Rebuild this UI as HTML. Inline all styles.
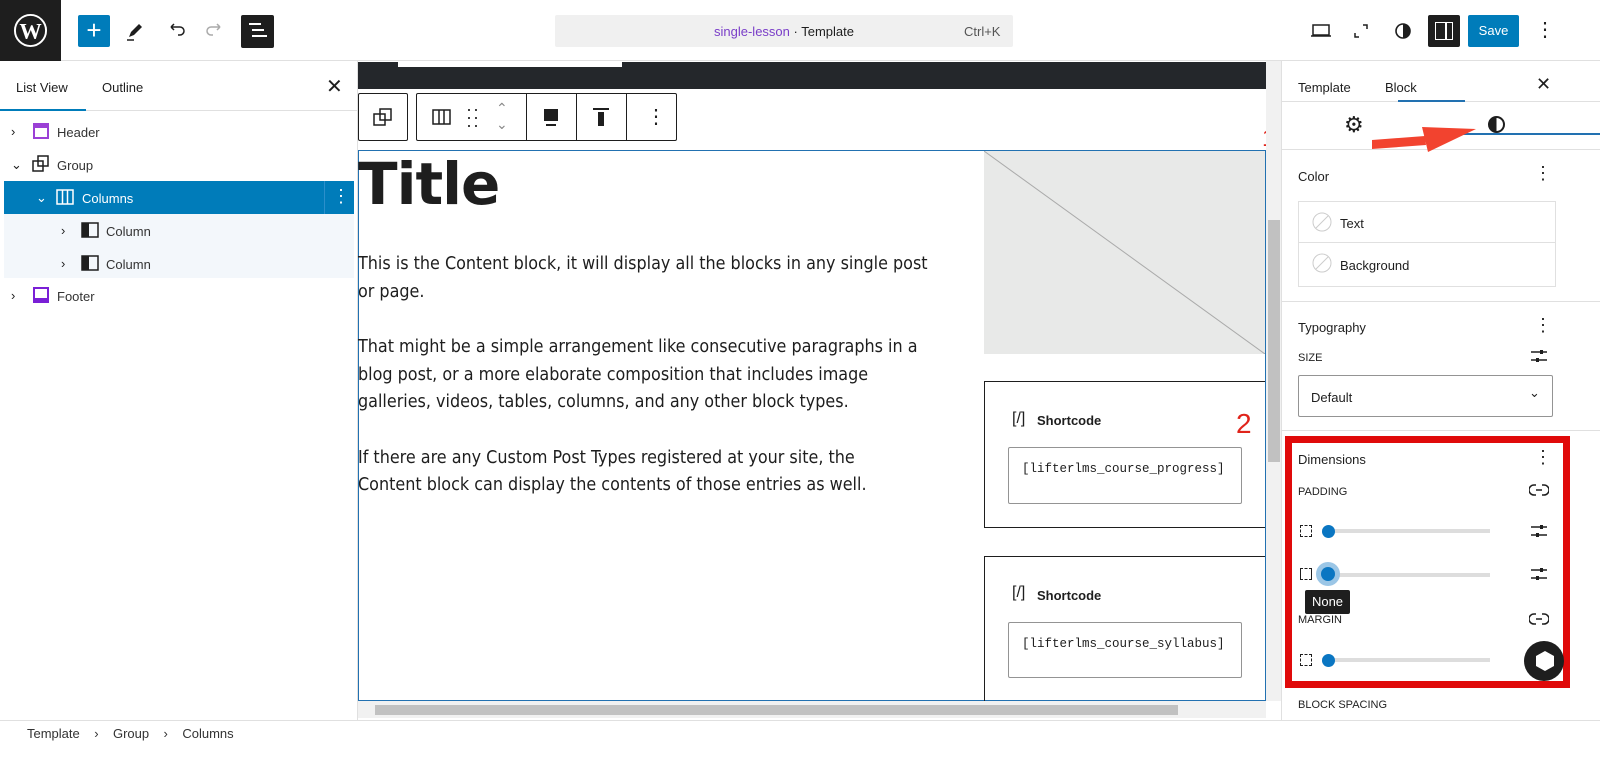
<!DOCTYPE html>
<html><head><meta charset="utf-8"><style>
*{box-sizing:border-box;margin:0;padding:0}
body{width:1600px;height:760px;overflow:hidden;background:#fff;font-family:"Liberation Sans",sans-serif;color:#1e1e1e;position:relative}
.a{position:absolute}
.t13{font-size:13px}
</style></head><body>
<!-- top bar -->
<div class="a" style="left:0;top:0;width:1600px;height:61px;border-bottom:1px solid #e0e0e0"></div>
<div class="a" style="left:0;top:0;width:61px;height:61px;background:#1e1e1e"></div>
<svg class="a" style="left:13px;top:13px" width="35" height="35" viewBox="0 0 36 36"><circle cx="18" cy="18" r="16" fill="none" stroke="#fff" stroke-width="2"/><text x="18" y="26" text-anchor="middle" font-family="Liberation Serif" font-weight="bold" font-size="23" fill="#fff">W</text></svg>
<div class="a" style="left:78px;top:15px;width:32px;height:32px;background:#007cba;border-radius:2px;color:#fff;font-size:26px;line-height:30px;text-align:center">+</div>
<svg class="a" style="left:124px;top:20px" width="22" height="22" viewBox="0 0 22 22"><path d="M5 17l2-5 8-8 3 3-8 8z" fill="#1e1e1e"/><path d="M3 20h7" stroke="#1e1e1e" stroke-width="1.5"/></svg>
<svg class="a" style="left:165px;top:20px" width="22" height="22" viewBox="0 0 22 22"><path d="M6 7h9a4 4 0 0 1 0 8h-2M6 7l3-3M6 7l3 3" fill="none" stroke="#1e1e1e" stroke-width="1.5"/></svg>
<svg class="a" style="left:204px;top:20px" width="22" height="22" viewBox="0 0 22 22"><path d="M16 7H7a4 4 0 0 0 0 8h2M16 7l-3-3M16 7l-3 3" fill="none" stroke="#aaa" stroke-width="1.5"/></svg>
<div class="a" style="left:241px;top:15px;width:33px;height:33px;background:#1e1e1e;border-radius:2px"></div>
<div class="a" style="left:249px;top:23px;width:12px;height:2px;background:#fff"></div>
<div class="a" style="left:252px;top:29px;width:12px;height:2px;background:#fff"></div>
<div class="a" style="left:252px;top:35px;width:15px;height:2px;background:#fff"></div>
<div class="a" style="left:555px;top:15px;width:458px;height:32px;background:#f0f0f0;border-radius:2px"></div>
<div class="a t13" style="left:555px;top:24px;width:458px;text-align:center"><span style="color:#7a3ec8">single-lesson</span> · Template</div>
<div class="a t13" style="left:964px;top:24px;color:#555">Ctrl+K</div>
<svg class="a" style="left:1310px;top:21px" width="22" height="20" viewBox="0 0 22 20"><rect x="3" y="4" width="16" height="10" fill="none" stroke="#1e1e1e" stroke-width="1.5"/><path d="M1 15h20" stroke="#1e1e1e" stroke-width="1.5"/></svg>
<svg class="a" style="left:1351px;top:21px" width="20" height="20" viewBox="0 0 20 20"><path d="M12 4h4v4M8 16H4v-4" fill="none" stroke="#1e1e1e" stroke-width="1.5"/></svg>
<svg class="a" style="left:1393px;top:21px" width="20" height="20" viewBox="0 0 20 20"><circle cx="10" cy="10" r="7" fill="none" stroke="#1e1e1e" stroke-width="1.6"/><path d="M10 3a7 7 0 0 1 0 14z" fill="#1e1e1e"/></svg>
<div class="a" style="left:1428px;top:15px;width:32px;height:32px;background:#1e1e1e;border-radius:2px"></div>
<div class="a" style="left:1435px;top:22px;width:18px;height:18px;border:1.5px solid #fff"></div>
<div class="a" style="left:1445px;top:22px;width:1.5px;height:18px;background:#fff"></div>
<div class="a t13" style="left:1468px;top:15px;width:51px;height:32px;background:#007cba;color:#fff;line-height:32px;text-align:center;border-radius:2px">Save</div>
<div class="a" style="left:1535px;top:18px;font-size:20px;line-height:24px">⋮</div>

<!-- left panel -->
<div class="a" style="left:357px;top:61px;width:1px;height:659px;background:#e0e0e0"></div>
<div class="a t13" style="left:16px;top:80px">List View</div>
<div class="a t13" style="left:102px;top:80px">Outline</div>
<div class="a" style="left:326px;top:74px;font-size:20px">✕</div>
<div class="a" style="left:0;top:110px;width:357px;height:1px;background:#e0e0e0"></div>
<div class="a" style="left:0;top:109px;width:86px;height:2px;background:#007cba"></div>
<div class="a" style="left:4px;top:214px;width:350px;height:64px;background:#f3f7fb"></div>
<div class="a" style="left:4px;top:181px;width:350px;height:33px;background:#007cba"></div>
<div class="a" style="left:324px;top:181px;width:1px;height:33px;background:#2b8fcb"></div>
<div class="a" style="left:332px;top:186px;color:#fff;font-size:18px">⋮</div>
<div class="a t13" style="left:11px;top:124px">›</div><div class="a" style="left:33px;top:123px;width:16px;height:16px;border:2px solid #9b40d6"></div><div class="a" style="left:33px;top:123px;width:16px;height:5px;background:#9b40d6"></div><div class="a t13" style="left:57px;top:125px;color:#333">Header</div>
<div class="a t13" style="left:11px;top:157px">⌄</div><svg class="a" style="left:32px;top:155px" width="18" height="18"><rect x="1" y="6" width="10" height="10" fill="none" stroke="#1e1e1e" stroke-width="1.5"/><rect x="6" y="1" width="10" height="10" fill="none" stroke="#1e1e1e" stroke-width="1.5"/></svg><div class="a t13" style="left:57px;top:158px;color:#333">Group</div>
<div class="a t13" style="left:36px;top:190px;color:#fff">⌄</div><svg class="a" style="left:56px;top:189px" width="18" height="16"><rect x="1" y="1" width="16" height="14" fill="none" stroke="#fff" stroke-width="1.5"/><path d="M6.5 1v14M11.5 1v14" stroke="#fff" stroke-width="1.5"/></svg><div class="a t13" style="left:82px;top:191px;color:#fff">Columns</div>
<div class="a t13" style="left:61px;top:223px">›</div><svg class="a" style="left:81px;top:222px" width="18" height="16"><rect x="1" y="1" width="16" height="14" fill="none" stroke="#1e1e1e" stroke-width="1.5"/><rect x="1" y="1" width="7" height="14" fill="#1e1e1e"/></svg><div class="a t13" style="left:106px;top:224px;color:#333">Column</div>
<div class="a t13" style="left:61px;top:256px">›</div><svg class="a" style="left:81px;top:255px" width="18" height="16"><rect x="1" y="1" width="16" height="14" fill="none" stroke="#1e1e1e" stroke-width="1.5"/><rect x="1" y="1" width="7" height="14" fill="#1e1e1e"/></svg><div class="a t13" style="left:106px;top:257px;color:#333">Column</div>
<div class="a t13" style="left:11px;top:288px">›</div><div class="a" style="left:33px;top:287px;width:16px;height:16px;border:2px solid #7a1fd6;border-bottom-width:5px"></div><div class="a t13" style="left:57px;top:289px;color:#333">Footer</div>

<!-- editor -->
<div class="a" style="left:358px;top:61px;width:908px;height:659px;background:#fff"></div>
<div class="a" style="left:358px;top:62px;width:908px;height:27px;background:#24272b"></div>
<div class="a" style="left:398px;top:62px;width:224px;height:5px;background:#fff"></div>
<div class="a" style="left:358px;top:93px;width:50px;height:48px;border:1px solid #1e1e1e;border-radius:2px"></div>
<svg class="a" style="left:373px;top:107px" width="20" height="20"><rect x="1" y="7" width="11" height="11" fill="none" stroke="#1e1e1e" stroke-width="1.5"/><rect x="7" y="2" width="11" height="11" fill="none" stroke="#1e1e1e" stroke-width="1.5"/></svg>
<div class="a" style="left:416px;top:93px;width:261px;height:48px;border:1px solid #1e1e1e;border-radius:2px"></div>
<div class="a" style="left:526px;top:93px;width:1px;height:48px;background:#1e1e1e"></div>
<div class="a" style="left:576px;top:93px;width:1px;height:48px;background:#1e1e1e"></div>
<div class="a" style="left:626px;top:93px;width:1px;height:48px;background:#1e1e1e"></div>
<svg class="a" style="left:432px;top:109px" width="20" height="17"><rect x="1" y="1" width="17" height="14" fill="none" stroke="#1e1e1e" stroke-width="1.5"/><path d="M7 1v14M12 1v14" stroke="#1e1e1e" stroke-width="1.5"/></svg>
<div class="a" style="left:466px;top:105px;font-size:18px;line-height:8px;letter-spacing:1px">··<br>··<br>··</div>
<div class="a" style="left:496px;top:100px;color:#888;font-size:14px;line-height:16px">⌃<br>⌄</div>
<div class="a" style="left:544px;top:109px;width:14px;height:12px;background:#1e1e1e"></div><div class="a" style="left:546px;top:124px;width:10px;height:2px;background:#1e1e1e"></div>
<div class="a" style="left:593px;top:108px;width:16px;height:2px;background:#1e1e1e"></div><div class="a" style="left:598px;top:112px;width:6px;height:14px;background:#1e1e1e"></div>
<div class="a" style="left:646px;top:104px;font-size:20px">⋮</div>

<div class="a" style="left:358px;top:150px;width:908px;height:551px;border:1px solid #2271b1"></div>
<div class="a" style="left:358px;top:151px;font-size:58px;font-weight:bold;letter-spacing:-1px;color:#1e1e1e;line-height:66px;font-family:'DejaVu Sans','Liberation Sans',sans-serif">Title</div>
<div class="a" style="left:358px;top:250px;width:620px;white-space:nowrap;font-size:17.8px;line-height:27.5px;color:#1e1e1e;font-family:'DejaVu Sans Condensed','Liberation Sans',sans-serif">
<p>This is the Content block, it will display all the blocks in any single post<br>or page.</p>
<p style="margin-top:28px">That might be a simple arrangement like consecutive paragraphs in a<br>blog post, or a more elaborate composition that includes image<br>galleries, videos, tables, columns, and any other block types.</p>
<p style="margin-top:28px">If there are any Custom Post Types registered at your site, the<br>Content block can display the contents of those entries as well.</p></div>
<div class="a" style="left:984px;top:151px;width:281px;height:203px;background:#e8e9e8"></div>
<svg class="a" style="left:984px;top:151px" width="281" height="203"><line x1="0" y1="0" x2="281" y2="203" stroke="#aaa"/></svg>
<div class="a" style="left:984px;top:381px;width:281px;height:147px;border:1px solid #1e1e1e;border-right:none"></div>
<div class="a" style="left:1012px;top:410px;font-size:16px">[/]</div><div class="a t13" style="left:1037px;top:413px;font-weight:bold">Shortcode</div>
<div class="a" style="left:1008px;top:447px;width:234px;height:57px;border:1px solid #949494;border-radius:2px;font-family:'Liberation Mono',monospace;font-size:12.5px;padding:14px 13px">[lifterlms_course_progress]</div>
<div class="a" style="left:984px;top:556px;width:281px;height:145px;border:1px solid #1e1e1e;border-right:none;border-bottom:none"></div>
<div class="a" style="left:1012px;top:584px;font-size:16px">[/]</div><div class="a t13" style="left:1037px;top:588px;font-weight:bold">Shortcode</div>
<div class="a" style="left:1008px;top:622px;width:234px;height:56px;border:1px solid #949494;border-radius:2px;font-family:'Liberation Mono',monospace;font-size:12.5px;padding:14px 13px">[lifterlms_course_syllabus]</div>
<div class="a" style="left:1262px;top:125px;color:#e0241b;font-size:24px">1</div>
<div class="a" style="left:1236px;top:408px;color:#e0241b;font-size:28px">2</div>
<!-- scrollbars -->
<div class="a" style="left:1266px;top:61px;width:15px;height:640px;background:#f1f1f1"></div>
<div class="a" style="left:1268px;top:220px;width:12px;height:242px;background:#c1c1c1"></div>
<div class="a" style="left:358px;top:701px;width:908px;height:17px;background:#f1f1f1"></div>
<div class="a" style="left:375px;top:705px;width:803px;height:10px;background:#c1c1c1"></div>
<div class="a" style="left:1281px;top:61px;width:1px;height:659px;background:#e0e0e0"></div>

<!-- right sidebar -->
<div class="a t13" style="left:1298px;top:80px">Template</div>
<div class="a t13" style="left:1385px;top:80px">Block</div>
<div class="a" style="left:1536px;top:74px;font-size:18px">✕</div>
<div class="a" style="left:1282px;top:101px;width:318px;height:1px;background:#e0e0e0"></div>
<div class="a" style="left:1398px;top:100px;width:67px;height:2px;background:#2271b1"></div>
<div class="a" style="left:1344px;top:112px;font-size:22px">⚙</div>
<svg class="a" style="left:1487px;top:115px" width="19" height="19"><circle cx="9.5" cy="9.5" r="7.5" fill="none" stroke="#1e1e1e" stroke-width="2"/><path d="M9.5 2a7.5 7.5 0 0 0 0 15z" fill="#1e1e1e"/></svg>
<div class="a" style="left:1282px;top:149px;width:318px;height:1px;background:#e0e0e0"></div>
<div class="a" style="left:1455px;top:133px;width:145px;height:2px;background:#2271b1"></div>
<svg class="a" style="left:1370px;top:105px" width="110" height="60"><polygon points="2,35 55,31 56,40 2,44" fill="#f2432f"/><polygon points="52,22 106,24 58,47" fill="#f2432f"/></svg>
<div class="a t13" style="left:1298px;top:169px">Color</div><div class="a" style="left:1534px;top:163px;font-size:18px">⋮</div>
<div class="a" style="left:1298px;top:201px;width:258px;height:86px;border:1px solid #e0e0e0"></div>
<div class="a" style="left:1299px;top:242px;width:256px;height:1px;background:#e0e0e0"></div>
<svg class="a" style="left:1312px;top:212px" width="20" height="20"><circle cx="10" cy="10" r="9" fill="none" stroke="#ccc"/><line x1="4" y1="16" x2="16" y2="4" stroke="#ccc"/></svg>
<svg class="a" style="left:1312px;top:253px" width="20" height="20"><circle cx="10" cy="10" r="9" fill="none" stroke="#ccc"/><line x1="4" y1="16" x2="16" y2="4" stroke="#ccc"/></svg>
<div class="a t13" style="left:1340px;top:216px">Text</div>
<div class="a t13" style="left:1340px;top:258px">Background</div>
<div class="a" style="left:1282px;top:301px;width:318px;height:1px;background:#e0e0e0"></div>
<div class="a t13" style="left:1298px;top:320px">Typography</div><div class="a" style="left:1534px;top:315px;font-size:18px">⋮</div>
<div class="a" style="left:1298px;top:352px;font-size:11px">SIZE</div>
<div class="a" style="left:1298px;top:375px;width:255px;height:42px;border:1px solid #949494;border-radius:2px"></div>
<div class="a t13" style="left:1311px;top:390px">Default</div><div class="a t13" style="left:1529px;top:385px">⌄</div>
<div class="a" style="left:1282px;top:430px;width:318px;height:1px;background:#e0e0e0"></div>
<!-- red box -->
<div class="a" style="left:1285px;top:436px;width:285px;height:252px;border:7px solid #e00a0a"></div>
<div class="a t13" style="left:1298px;top:452px">Dimensions</div><div class="a" style="left:1534px;top:447px;font-size:18px">⋮</div>
<div class="a" style="left:1298px;top:486px;font-size:11px">PADDING</div>
<div class="a" style="left:1298px;top:614px;font-size:11px">MARGIN</div>
<svg class="a" style="left:1529px;top:482px" width="20" height="16"><path d="M7 3H5a5 5 0 0 0 0 10h2M13 3h2a5 5 0 0 1 0 10h-2M7 8h6" fill="none" stroke="#1e1e1e" stroke-width="1.5"/></svg>
<svg class="a" style="left:1529px;top:611px" width="20" height="16"><path d="M7 3H5a5 5 0 0 0 0 10h2M13 3h2a5 5 0 0 1 0 10h-2M7 8h6" fill="none" stroke="#1e1e1e" stroke-width="1.5"/></svg>
<div class="a" style="left:1300px;top:525px;width:12px;height:12px;border:1.5px dashed #1e1e1e"></div>
<div class="a" style="left:1300px;top:568px;width:12px;height:12px;border:1.5px solid #1e1e1e;border-top-style:dashed;border-bottom-style:dashed"></div>
<div class="a" style="left:1300px;top:654px;width:12px;height:12px;border:1.5px dashed #1e1e1e"></div>
<div class="a" style="left:1322px;top:529px;width:168px;height:4px;background:#ddd"></div>
<div class="a" style="left:1322px;top:573px;width:168px;height:4px;background:#ddd"></div>
<div class="a" style="left:1322px;top:658px;width:168px;height:4px;background:#ddd"></div>
<div class="a" style="left:1322px;top:525px;width:13px;height:13px;border-radius:50%;background:#0a76c2"></div>
<div class="a" style="left:1316px;top:562px;width:24px;height:24px;border-radius:50%;background:#9bc6e6"></div>
<div class="a" style="left:1321px;top:567px;width:14px;height:14px;border-radius:50%;background:#0a76c2"></div>
<div class="a" style="left:1322px;top:654px;width:13px;height:13px;border-radius:50%;background:#0a76c2"></div>
<svg class="a" style="left:1530px;top:522px" width="18" height="18"><path d="M1 5h16M1 13h16" stroke="#1e1e1e" stroke-width="1.5"/><rect x="10" y="3" width="3" height="4" fill="#1e1e1e"/><rect x="6" y="11" width="3" height="4" fill="#1e1e1e"/></svg>
<svg class="a" style="left:1530px;top:565px" width="18" height="18"><path d="M1 5h16M1 13h16" stroke="#1e1e1e" stroke-width="1.5"/><rect x="10" y="3" width="3" height="4" fill="#1e1e1e"/><rect x="6" y="11" width="3" height="4" fill="#1e1e1e"/></svg>
<svg class="a" style="left:1530px;top:347px" width="18" height="18"><path d="M1 5h16M1 13h16" stroke="#1e1e1e" stroke-width="1.5"/><rect x="10" y="3" width="3" height="4" fill="#1e1e1e"/><rect x="6" y="11" width="3" height="4" fill="#1e1e1e"/></svg>
<div class="a t13" style="left:1305px;top:590px;width:45px;height:24px;background:#1e1e1e;color:#fff;line-height:24px;text-align:center;border-radius:2px">None</div>
<div class="a" style="left:1524px;top:641px;width:40px;height:40px;border-radius:50%;background:#1e1e1e"></div>
<svg class="a" style="left:1533px;top:649px" width="24" height="24"><polygon points="12,2 21,7 21,17 12,22 3,17 3,7" fill="#fff"/></svg>
<div class="a" style="left:1298px;top:699px;font-size:11px">BLOCK SPACING</div>

<!-- footer breadcrumb -->
<div class="a" style="left:0;top:720px;width:1600px;height:1px;background:#e0e0e0"></div>
<div class="a t13" style="left:27px;top:726px;color:#333">Template &nbsp;&nbsp;&nbsp;›&nbsp;&nbsp;&nbsp; Group &nbsp;&nbsp;&nbsp;›&nbsp;&nbsp;&nbsp; Columns</div>
</body></html>
